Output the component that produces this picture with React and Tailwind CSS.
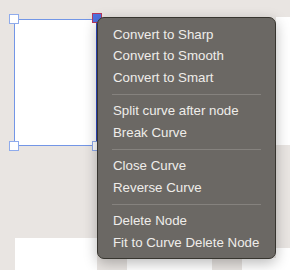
const groups = [
  ['Convert to Sharp', 'Convert to Smooth', 'Convert to Smart'],
  ['Split curve after node', 'Break Curve'],
  ['Close Curve', 'Reverse Curve'],
  ['Delete Node', 'Fit to Curve Delete Node'],
];

function Handle({ className, active = false }) {
  return (
    <div
      className={`absolute h-[10px] w-[10px] border-[1.5px] ${
        active ? 'border-[#b8375e] bg-[#4f72e3]' : 'border-[#8fabec] bg-white'
      } ${className}`}
    />
  );
}

export default function App() {
  return (
    <div
      className="relative h-[270px] w-[290px] overflow-hidden bg-[#e9e5e2]"
      style={{ fontFamily: '"Liberation Sans", Arial, sans-serif' }}
    >
      {/* other shapes on the canvas */}
      <div className="absolute left-[276px] top-[17px] h-[128px] w-[20px] bg-white" />
      <div className="absolute left-[15px] top-[238px] h-[40px] w-[82px] bg-white" />
      <div className="absolute left-[127px] top-[258px] h-[20px] w-[85px] bg-white" />
      <div className="absolute left-[242px] top-[258px] h-[20px] w-[60px] bg-white" />
      <div className="absolute left-[276px] top-[248px] h-[30px] w-[20px] bg-white" />

      {/* selected shape with its node handles */}
      <div className="absolute left-[14px] top-[19px] h-[127px] w-[83px] border-[1.5px] border-[#7396e6] border-r-[#3048c0] bg-white">
        <Handle className="-left-[6px] -top-[6px]" />
        <Handle className="-bottom-[6px] -left-[6px]" />
        <Handle className="-bottom-[6px] -right-[6px]" />
        <Handle className="-right-[6px] -top-[7px]" active />
      </div>

      {/* context menu */}
      <div className="absolute left-[97px] top-[17px] w-[179px] rounded-[7px] border border-[#37352f] bg-[#6b6864] pb-[4px] pt-[6px] text-[13.3px] text-[#efedea] shadow-[0_4px_14px_rgba(0,0,0,0.28)]">
        {groups.map((items, gi) => (
          <div key={gi}>
            {gi > 0 && (
              <div className="flex h-[12px] items-center px-[14px]">
                <div className="h-px w-full bg-[#85827e]" />
              </div>
            )}
            {items.map((label) => (
              <div key={label} className="flex h-[21.5px] items-center whitespace-nowrap px-[15px]">
                {label}
              </div>
            ))}
          </div>
        ))}
      </div>
    </div>
  );
}
